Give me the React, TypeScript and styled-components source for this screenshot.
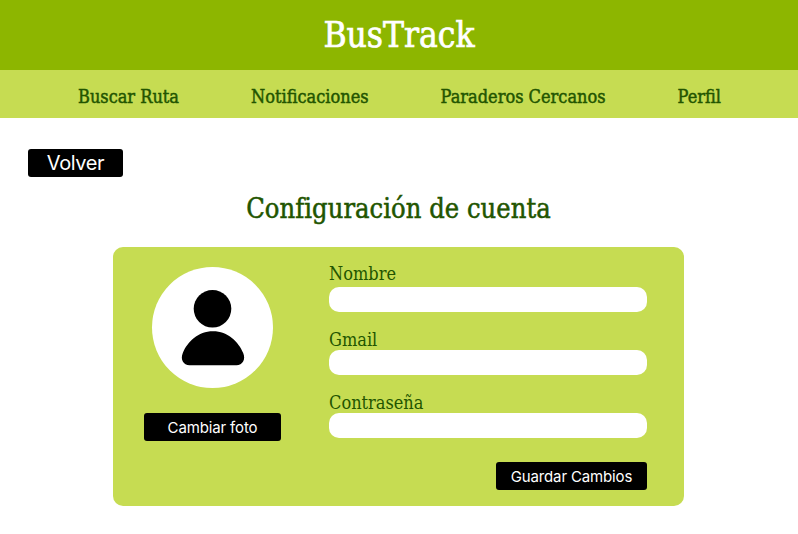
import React from "react";
import styled, { createGlobalStyle } from "styled-components";

const Global = createGlobalStyle`
  * { box-sizing: border-box; }
  body { margin: 0; background: #fff; }
`;
const serif = `"DejaVu Serif Condensed", "DejaVu Serif", serif`;
const Page = styled.div`
  width: 798px;
  height: 534px;
  overflow: hidden;
  color: #225500;
  font-family: ${serif};
  font-stretch: condensed;
`;
const Header = styled.header`
  height: 70px;
  background: #8db600;
  color: #fff;
  display: flex;
  justify-content: center;
`;
const Brand = styled.h1`
  margin: 0;
  font-size: 35px;
  font-weight: 400;
  line-height: 70px;
  -webkit-text-stroke: 0.7px currentColor;
`;
const Nav = styled.nav`
  height: 48px;
  padding: 0 77px 0 78px;
  background: #c6dc52;
  display: flex;
  justify-content: space-between;
`;
const NavLink = styled.a`
  font-size: 18px;
  line-height: 54px;
  -webkit-text-stroke: 0.45px currentColor;
`;
const Main = styled.main`
  padding: 31px 114px 0 113px;
`;
const Button = styled.button<{ $width: number }>`
  display: block;
  width: ${(p) => p.$width}px;
  height: 28px;
  padding: 1px 0 0;
  border: 0;
  border-radius: 3px;
  background: #000;
  color: #fff;
  font: 400 15px/27px Inter, sans-serif;
  letter-spacing: -0.14px;
`;
const BackButton = styled(Button)`
  margin-left: -85px;
  padding: 0;
  font-size: 20px;
  line-height: 28px;
  letter-spacing: -0.4px;
`;
const Title = styled.h2`
  margin: 12px 0 18px;
  font-size: 27px;
  font-weight: 400;
  line-height: 40px;
  letter-spacing: 0.05px;
  font-variant-ligatures: common-ligatures;
  text-align: center;
  -webkit-text-stroke: 0.5px currentColor;
`;
const Card = styled.section`
  height: 259px;
  padding: 20px 37px 16px 31px;
  border-radius: 10px;
  background: #c6dc52;
  display: flex;
  justify-content: space-between;
`;
const Photo = styled.div`
  width: 137px;
  display: flex;
  flex-direction: column;
  align-items: center;
  gap: 25px;
`;
const Avatar = styled.svg`
  display: block;
  width: 121px;
  height: 121px;
  border-radius: 50%;
  background: #fff;
`;
const Form = styled.form`
  width: 318px;
  display: flex;
  flex-direction: column;
  gap: 21px;
`;
const Field = styled.label`
  display: block;
`;
const Label = styled.span<{ $height: number }>`
  display: block;
  height: ${(p) => p.$height}px;
  font-size: 18px;
  line-height: 14px;
`;
const Input = styled.input`
  display: block;
  width: 318px;
  height: 25px;
  padding: 0 10px;
  border: 0;
  border-radius: 10px;
  background: #fff;
`;
const SaveButton = styled(Button)`
  align-self: flex-end;
  margin-top: 3px;
`;

export default function App() {
  return (
    <Page>
      <Global />
      <Header><Brand>BusTrack</Brand></Header>
      <Nav>
        <NavLink>Buscar Ruta</NavLink>
        <NavLink>Notificaciones</NavLink>
        <NavLink>Paraderos Cercanos</NavLink>
        <NavLink>Perfil</NavLink>
      </Nav>
      <Main>
        <BackButton $width={95}>Volver</BackButton>
        <Title>Configuración de cuenta</Title>
        <Card>
          <Photo>
            <Avatar viewBox="0 0 121 121">
              <circle cx="60.500" cy="41.800" r="18.800" />
              <path d="M61 64.300C76 64.300 86.500 75 91.200 86C94 92.500 90.500 98.300 84.500 98.300H37.500C31.500 98.300 28 92.500 30.800 86C35.500 75 46 64.300 61 64.300Z" />
            </Avatar>
            <Button $width={137}>Cambiar foto</Button>
          </Photo>
          <Form>
            <Field><Label $height={20}>Nombre</Label><Input /></Field>
            <Field><Label $height={17}>Gmail</Label><Input /></Field>
            <Field><Label $height={17}>Contraseña</Label><Input type="password" /></Field>
            <SaveButton type="button" $width={151}>Guardar Cambios</SaveButton>
          </Form>
        </Card>
      </Main>
    </Page>
  );
}
